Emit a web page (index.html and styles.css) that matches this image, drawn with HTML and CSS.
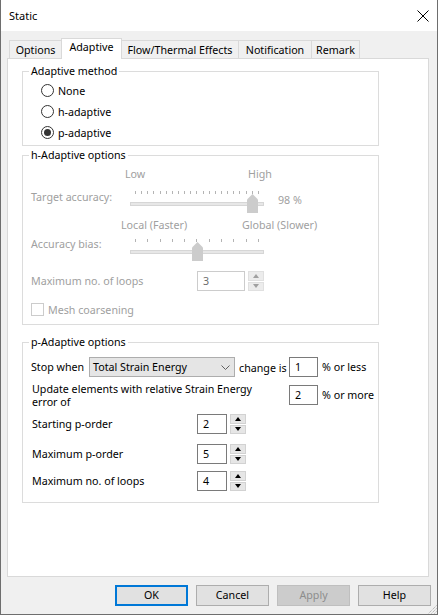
FILE: index.html
```html
<!DOCTYPE html>
<html>
<head>
<meta charset="utf-8">
<title>Static</title>
<link rel="stylesheet" href="styles.css">
</head>
<body>
<div class="window">
  <div class="titlebar">
    <span class="title">Static</span>
    <svg class="close" width="12" height="12" viewBox="0 0 12 12"><path d="M0.5 0.5L11.5 11.5M11.5 0.5L0.5 11.5" stroke="#000" stroke-width="1" fill="none"/></svg>
  </div>
  <div class="client">
    <div class="tabs">
      <div class="tab t-options">Options</div>
      <div class="tab active t-adaptive">Adaptive</div>
      <div class="tab t-flow">Flow/Thermal Effects</div>
      <div class="tab t-notif">Notification</div>
      <div class="tab t-remark">Remark</div>
    </div>
    <div class="panel">
      <fieldset class="group g-method">
        <legend>Adaptive method</legend>
        <div class="radio-row"><span class="radio"></span><span>None</span></div>
        <div class="radio-row"><span class="radio"></span><span>h-adaptive</span></div>
        <div class="radio-row"><span class="radio checked"></span><span>p-adaptive</span></div>
      </fieldset>

      <fieldset class="group g-h">
        <legend>h-Adaptive options</legend>
        <div class="slabels sl-1"><span class="sl-a">Low</span><span>High</span></div>
        <div class="srow sr-1">
          <span class="slabel">Target accuracy:</span>
          <div class="slider">
            <div class="ticks"><i></i><i></i><i></i><i></i><i></i><i></i><i></i><i></i><i></i><i></i><i></i><i></i><i></i><i></i><i></i><i></i><i></i><i></i><i></i><i></i><i></i></div>
            <div class="track"></div>
            <svg class="thumb th-target" width="11" height="19" viewBox="0 0 11 19"><polygon points="0,5.5 5.5,0 11,5.5 11,19 0,19" fill="#cccccc"/></svg>
          </div>
          <span class="sval">98 %</span>
        </div>
        <div class="slabels sl-2"><span class="sl-a">Local (Faster)</span><span>Global (Slower)</span></div>
        <div class="srow sr-2">
          <span class="slabel">Accuracy bias:</span>
          <div class="slider">
            <div class="ticks"><i></i><i></i><i></i><i></i><i></i><i></i><i></i><i></i><i></i><i></i><i></i></div>
            <div class="track"></div>
            <svg class="thumb th-bias" width="11" height="19" viewBox="0 0 11 19"><polygon points="0,5.5 5.5,0 11,5.5 11,19 0,19" fill="#cccccc"/></svg>
          </div>
        </div>
        <div class="frow h-loops dis">
          <span class="flabel">Maximum no. of loops</span>
          <span class="field wide dis-field">3</span>
          <span class="spin dis-spin"><span class="sb up"></span><span class="sb dn"></span></span>
        </div>
        <div class="check-row">
          <span class="check"></span><span>Mesh coarsening</span>
        </div>
      </fieldset>

      <fieldset class="group g-p">
        <legend>p-Adaptive options</legend>
        <div class="prow p-stop">
          <span class="stop-lbl">Stop when</span>
          <span class="combo"><span>Total Strain Energy</span><svg width="9" height="5" viewBox="0 0 9 5"><path d="M0.5 0.5L4.5 4.5L8.5 0.5" stroke="#606060" fill="none"/></svg></span>
          <span class="chg-lbl">change is</span>
          <span class="field narrow">1</span>
          <span class="unit">% or less</span>
        </div>
        <div class="prow p-upd">
          <span class="upd-lbl">Update elements with relative Strain Energy<br>error of</span>
          <span class="field narrow">2</span>
          <span class="unit">% or more</span>
        </div>
        <div class="frow p-r1">
          <span class="flabel">Starting p-order</span>
          <span class="field small">2</span>
          <span class="spin"><span class="sb up"></span><span class="sb dn"></span></span>
        </div>
        <div class="frow p-r2">
          <span class="flabel">Maximum p-order</span>
          <span class="field small">5</span>
          <span class="spin"><span class="sb up"></span><span class="sb dn"></span></span>
        </div>
        <div class="frow p-r3">
          <span class="flabel">Maximum no. of loops</span>
          <span class="field small">4</span>
          <span class="spin"><span class="sb up"></span><span class="sb dn"></span></span>
        </div>
      </fieldset>
    </div>
    <div class="buttons">
      <span class="btn default">OK</span>
      <span class="btn">Cancel</span>
      <span class="btn disabled">Apply</span>
      <span class="btn">Help</span>
    </div>
  </div>
  <svg class="grip" width="10" height="10" viewBox="0 0 10 10">
    <path d="M9.5 1.5L1.5 9.5M9.5 4.5L4.5 9.5M9.5 7.5L7.5 9.5" stroke="#a0a0a0" stroke-width="1" stroke-dasharray="1 1" fill="none"/>
  </svg>
</div>
</body>
</html>
```

FILE: styles.css
```css
* { box-sizing: border-box; }
html, body { margin: 0; padding: 0; }
body {
  font-family: "Noto Sans", "Open Sans", sans-serif;
  font-size: 10.7px;
  color: #000;
  background: #fff;
}
.window {
  position: relative;
  width: 438px;
  height: 615px;
  border: 1px solid #6e6e6e;
  border-top: none;
  display: flex;
  flex-direction: column;
}
.titlebar {
  height: 31px;
  flex: none;
  background: #fff;
  display: flex;
  align-items: center;
  justify-content: space-between;
  padding: 0 8px 0 8px;
}
.title { font-size: 11px; line-height: 16px; }
.close { display: block; }
.client {
  flex: 1;
  background: #f0f0f0;
  padding: 9px 8px 8px 6px;
  display: flex;
  flex-direction: column;
}
.tabs {
  height: 18px;
  display: flex;
  align-items: flex-end;
  margin-left: 2px;
  position: relative;
  z-index: 2;
}
.tab {
  height: 18px;
  border: 1px solid #d9d9d9;
  border-bottom: none;
  background: #f0f0f0;
  text-align: center;
  line-height: 16px;
  padding-top: 1px;
  margin-left: -1px;
  white-space: nowrap;
}
.t-options { width: 53px; margin-left: 0; }
.t-adaptive { width: 61px; }
.t-flow { width: 118px; }
.t-notif { width: 74px; }
.t-remark { width: 49px; }
.tab.active {
  height: 21px;
  margin-bottom: -1px;
  background: #fff;
  position: relative;
  z-index: 3;
  padding-top: 0;
  line-height: 17px;
}
.panel {
  height: 519px;
  flex: none;
  background: #fff;
  border: 1px solid #d9d9d9;
  padding: 4px 0 0 14px;
}
.group {
  width: 357px;
  margin: 0;
  border: 1px solid #dcdcdc;
  padding: 0 0 0 8px;
  min-width: 0;
}
.group legend {
  padding: 0 2px;
  margin-left: -2px;
  line-height: 16px;
}
/* Adaptive method */
.g-method { padding-top: 1px; padding-bottom: 2px; }
.radio-row {
  height: 21px;
  display: flex;
  align-items: center;
  padding-left: 10px;
  line-height: 16px;
}
.radio {
  width: 13px;
  height: 13px;
  border: 1px solid #333;
  border-radius: 50%;
  background: #fff;
  margin-right: 4px;
  display: flex;
  align-items: center;
  justify-content: center;
}
.radio.checked::after {
  content: "";
  width: 7px;
  height: 7px;
  border-radius: 50%;
  background: #333;
}
/* h-adaptive */
.g-h { margin-top: 1px; padding-bottom: 8px; color: #a0a0a0; }
.g-h legend { color: #000; }
.slabels { display: flex; line-height: 16px; height: 16px; padding-left: 94px; }
.sl-1 { margin-top: 3px; }
.sl-1 .sl-a { width: 123px; }
.sl-2 { margin-top: 3px; padding-left: 90px; }
.sl-2 .sl-a { width: 121px; }
.srow {
  display: grid;
  grid-template-columns: 99px 134px auto;
  align-items: start;
  line-height: 16px;
}
.sr-1 { margin-top: 7px; }
.sr-1 .slider { margin-top: 2px; }
.sval { margin-left: 14px; margin-top: 3px; }
.sr-2 { margin-top: 3px; }
.sr-2 .slider { margin-top: 3px; }
.slider { position: relative; height: 23px; }
.ticks {
  display: flex;
  justify-content: space-between;
  padding: 0 5px 0 5px;
  height: 3px;
}
.ticks i { display: block; width: 1px; height: 3px; background: #b4b4b4; }
.track {
  margin-top: 8px;
  height: 4px;
  background: #e7e7e7;
  border: 1px solid #d6d6d6;
}
.thumb { position: absolute; top: 3px; display: block; }
.th-target { left: 117px; }
.th-bias { left: 62px; }

.frow {
  display: flex;
  align-items: center;
  line-height: 16px;
}
.flabel { width: 166px; flex: none; }
.h-loops { margin-top: 9px; }
.field {
  height: 20px;
  border: 1px solid #7a7a7a;
  background: #fff;
  padding-left: 5px;
  line-height: 18px;
  color: #000;
  flex: none;
}
.field.wide { width: 48px; }
.field.narrow { width: 29px; }
.field.small { width: 30px; }
.field.dis-field { border-color: #cccccc; color: #6d6d6d; }
.spin {
  width: 16px;
  height: 20px;
  margin-left: 3px;
  display: flex;
  flex-direction: column;
  gap: 1px;
  padding: 0;
  flex: none;
}
.sb {
  flex: 1;
  background: #e6e6e6;
  border: 1px solid #d2d2d2;
  display: flex;
  align-items: center;
  justify-content: center;
}
.sb::after {
  content: "";
  width: 0;
  height: 0;
  border-left: 3.5px solid transparent;
  border-right: 3.5px solid transparent;
}
.sb.up::after { border-bottom: 4px solid #000; }
.sb.dn::after { border-top: 4px solid #000; }
.dis-spin .sb { background: #ececec; border-color: #e0e0e0; }
.dis-spin .sb.up::after { border-bottom-color: #a0a0a0; }
.dis-spin .sb.dn::after { border-top-color: #a0a0a0; }
.check-row {
  margin-top: 12px;
  display: flex;
  align-items: center;
  height: 13px;
  line-height: 16px;
}
.check {
  width: 13px;
  height: 13px;
  border: 1px solid #cccccc;
  background: #fff;
  margin-right: 4px;
}
/* p-adaptive */
.g-p { margin-top: 9px; padding-bottom: 11px; }
.prow { display: flex; align-items: center; line-height: 16px; }
.p-stop { margin-top: 7px; }
.stop-lbl { width: 58px; flex: none; }
.combo {
  width: 146px;
  height: 20px;
  background: #e5e5e5;
  border: 1px solid #adadad;
  display: flex;
  align-items: center;
  justify-content: space-between;
  padding: 0 4px 0 3px;
  flex: none;
}
.combo svg { display: block; }
.chg-lbl { width: 50px; margin-left: 4px; flex: none; padding-top: 2px; }
.unit { margin-left: 4px; }
.p-upd { margin-top: 6px; align-items: flex-start; }
.upd-lbl { width: 258px; flex: none; line-height: 13px; padding-left: 1px; }
.p-upd .field { margin-top: 2px; }
.p-upd .unit { margin-top: 4px; }
.p-r1 { margin-top: 5px; }
.p-r2 { margin-top: 10px; }
.p-r3 { margin-top: 7px; }
.g-p .flabel { padding-left: 1px; }
/* buttons */
.buttons {
  display: flex;
  justify-content: flex-end;
  gap: 8px;
  margin-top: 8px;
  margin-right: -2px;
}
.btn {
  width: 73px;
  height: 21px;
  background: #e1e1e1;
  border: 1px solid #adadad;
  text-align: center;
  line-height: 19px;
}
.btn.default { border: 2px solid #0078d7; line-height: 17px; }
.btn.disabled { background: #cccccc; border-color: #bfbfbf; color: #8c8c8c; }
.grip { position: absolute; right: 0; bottom: 0; display: block; }
```
